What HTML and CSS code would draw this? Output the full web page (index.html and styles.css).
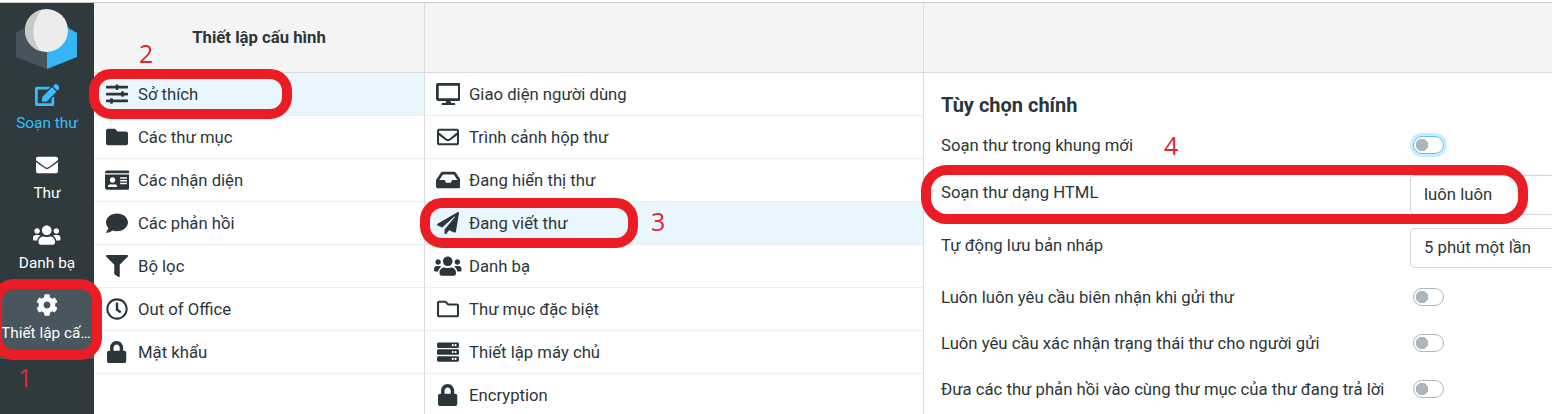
FILE: index.html
```html
<!DOCTYPE html>
<html lang="vi">
<head>
    <meta charset="UTF-8">
    <title>Thiết lập cấu hình</title>
    <link rel="stylesheet" href="styles.css">
</head>
<body>

<svg class="sprite" xmlns="http://www.w3.org/2000/svg">
    <defs>
        <path id="i-edit" d="M402.6 83.2l90.2 90.2c3.8 3.8 3.8 10 0 13.8L274.4 405.6l-92.8 10.3c-12.4 1.4-22.9-9.1-21.5-21.5l10.3-92.8L388.8 83.2c3.8-3.8 10-3.8 13.8 0zm162-22.9l-48.8-48.8c-15.2-15.2-39.9-15.2-55.2 0l-35.4 35.4c-3.8 3.8-3.8 10 0 13.8l90.2 90.2c3.8 3.8 10 3.8 13.8 0l35.4-35.4c15.2-15.3 15.2-40 0-55.2zM384 346.2V448H64V128h229.8c3.2 0 6.2-1.3 8.5-3.5l40-40c7.6-7.6 2.2-20.5-8.5-20.5H48C21.5 64 0 85.5 0 112v352c0 26.5 21.5 48 48 48h352c26.5 0 48-21.5 48-48V306.2c0-10.7-12.9-16-20.5-8.5l-40 40c-2.2 2.3-3.5 5.3-3.5 8.5z"/>
        <path id="i-envelope" d="M502.3 190.8c3.9-3.1 9.7-.2 9.7 4.7V400c0 26.5-21.5 48-48 48H48c-26.5 0-48-21.5-48-48V195.6c0-5 5.7-7.8 9.7-4.7 22.4 17.4 52.1 39.5 154.1 113.6 21.1 15.4 56.7 47.8 92.2 47.6 35.7.3 72-32.8 92.3-47.6 102-74.1 131.6-96.3 154-113.7zM256 320c23.2.4 56.6-29.2 73.4-41.4 132.7-96.3 142.8-104.7 173.4-128.7 5.8-4.5 9.2-11.5 9.2-18.9v-19c0-26.5-21.5-48-48-48H48C21.5 64 0 85.5 0 112v19c0 7.4 3.4 14.3 9.2 18.9 30.6 23.9 40.7 32.4 173.4 128.7 16.8 12.2 50.2 41.8 73.4 41.4z"/>
        <path id="i-envelope-o" d="M464 64H48C21.49 64 0 85.49 0 112v288c0 26.51 21.49 48 48 48h416c26.51 0 48-21.49 48-48V112c0-26.51-21.49-48-48-48zm0 48v40.805c-22.422 18.259-58.168 46.651-134.587 106.49-16.841 13.247-50.201 45.072-73.413 44.701-23.208.375-56.579-31.459-73.413-44.701C106.18 199.465 70.425 171.067 48 152.805V112h416zM48 400V214.398c22.914 18.251 55.409 43.862 104.938 82.646 21.857 17.205 60.134 55.186 103.062 54.955 42.717.231 80.509-37.199 103.053-54.947 49.528-38.783 82.032-64.401 104.947-82.653V400H48z"/>
        <path id="i-users" d="M96 224c35.3 0 64-28.7 64-64s-28.7-64-64-64-64 28.7-64 64 28.7 64 64 64zm448 0c35.3 0 64-28.7 64-64s-28.7-64-64-64-64 28.7-64 64 28.7 64 64 64zm32 32h-64c-17.6 0-33.5 7.1-45.1 18.6 40.3 22.1 68.9 62 75.1 109.4h66c17.7 0 32-14.3 32-32v-32c0-35.3-28.7-64-64-64zm-256 0c61.9 0 112-50.1 112-112S381.9 32 320 32 208 82.1 208 144s50.1 112 112 112zm76.8 32h-8.3c-20.8 10-43.9 16-68.5 16s-47.6-6-68.5-16h-8.3C179.6 288 128 339.6 128 403.2V432c0 26.5 21.5 48 48 48h288c26.5 0 48-21.5 48-48v-28.8c0-63.6-51.6-115.2-115.2-115.2zm-223.7-13.4C161.5 263.1 145.6 256 128 256H64c-35.3 0-64 28.7-64 64v32c0 17.7 14.3 32 32 32h65.9c6.3-47.4 34.9-87.3 75.2-109.4z"/>
        <path id="i-cog" d="M487.4 315.7l-42.6-24.6c4.3-23.2 4.3-47 0-70.2l42.6-24.6c4.9-2.8 7.1-8.6 5.5-14-11.1-35.6-30-67.8-54.7-94.6-3.8-4.1-10-5.1-14.8-2.3L380.8 110c-17.9-15.4-38.5-27.3-60.8-35.1V25.8c0-5.6-3.9-10.5-9.4-11.7-36.7-8.2-74.3-7.8-109.2 0-5.5 1.2-9.4 6.1-9.4 11.7V75c-22.2 7.9-42.8 19.8-60.8 35.1L88.7 85.5c-4.9-2.8-11-1.9-14.8 2.3-24.7 26.7-43.6 58.9-54.7 94.6-1.7 5.4.6 11.2 5.5 14L67.3 221c-4.3 23.2-4.3 47 0 70.2l-42.6 24.6c-4.9 2.8-7.1 8.6-5.5 14 11.1 35.6 30 67.8 54.7 94.6 3.8 4.1 10 5.1 14.8 2.3l42.6-24.6c17.9 15.4 38.5 27.3 60.8 35.1v49.2c0 5.6 3.9 10.5 9.4 11.7 36.7 8.2 74.3 7.8 109.2 0 5.5-1.2 9.4-6.1 9.4-11.7v-49.2c22.2-7.9 42.8-19.8 60.8-35.1l42.6 24.6c4.9 2.8 11 1.9 14.8-2.3 24.7-26.7 43.6-58.9 54.7-94.6 1.5-5.5-.7-11.3-5.6-14.1zM256 336c-44.1 0-80-35.9-80-80s35.9-80 80-80 80 35.9 80 80-35.9 80-80 80z"/>
        <path id="i-sliders" d="M496 384H160v-16c0-8.8-7.2-16-16-16h-32c-8.8 0-16 7.2-16 16v16H16c-8.8 0-16 7.2-16 16v32c0 8.8 7.2 16 16 16h80v16c0 8.8 7.2 16 16 16h32c8.8 0 16-7.2 16-16v-16h336c8.8 0 16-7.2 16-16v-32c0-8.8-7.2-16-16-16zm0-160h-80v-16c0-8.8-7.2-16-16-16h-32c-8.8 0-16 7.2-16 16v16H16c-8.8 0-16 7.2-16 16v32c0 8.8 7.2 16 16 16h336v16c0 8.8 7.2 16 16 16h32c8.8 0 16-7.2 16-16v-16h80c8.8 0 16-7.2 16-16v-32c0-8.8-7.2-16-16-16zm0-160H288V48c0-8.8-7.2-16-16-16h-32c-8.8 0-16 7.2-16 16v16H16C7.2 64 0 71.2 0 80v32c0 8.8 7.2 16 16 16h208v16c0 8.8 7.2 16 16 16h32c8.8 0 16-7.2 16-16v-16h208c8.8 0 16-7.2 16-16V80c0-8.8-7.2-16-16-16z"/>
        <path id="i-folder" d="M464 128H272l-64-64H48C21.49 64 0 85.49 0 112v288c0 26.51 21.49 48 48 48h416c26.51 0 48-21.49 48-48V176c0-26.51-21.49-48-48-48z"/>
        <path id="i-folder-o" d="M464 128H272l-54.63-54.63c-6-6-14.14-9.37-22.63-9.37H48C21.49 64 0 85.49 0 112v288c0 26.51 21.49 48 48 48h416c26.51 0 48-21.49 48-48V176c0-26.51-21.49-48-48-48zm0 272H48V112h140.12l54.63 54.63c6 6 14.14 9.37 22.63 9.37H464v224z"/>
        <path id="i-idcard" d="M528 32H48C21.5 32 0 53.5 0 80v16h576V80c0-26.5-21.5-48-48-48zM0 432c0 26.5 21.5 48 48 48h480c26.5 0 48-21.5 48-48V128H0v304zm352-232c0-4.4 3.6-8 8-8h144c4.4 0 8 3.6 8 8v16c0 4.4-3.6 8-8 8H360c-4.4 0-8-3.6-8-8v-16zm0 64c0-4.4 3.6-8 8-8h144c4.4 0 8 3.6 8 8v16c0 4.4-3.6 8-8 8H360c-4.4 0-8-3.6-8-8v-16zm0 64c0-4.4 3.6-8 8-8h144c4.4 0 8 3.6 8 8v16c0 4.4-3.6 8-8 8H360c-4.4 0-8-3.6-8-8v-16zM176 192c35.3 0 64 28.7 64 64s-28.7 64-64 64-64-28.7-64-64 28.7-64 64-64zM67.1 396.2C75.5 370.5 99.6 352 128 352h8.2c12.3 5.1 25.7 8 39.8 8s27.6-2.9 39.8-8h8.2c28.4 0 52.5 18.5 60.9 44.2 3.2 9.9-5.2 19.8-15.6 19.8H82.7c-10.4 0-18.8-10-15.6-19.8z"/>
        <path id="i-comment" d="M256 32C114.6 32 0 125.1 0 240c0 49.6 21.4 95 57 130.7C44.5 421.1 2.7 466 2.2 466.5c-2.2 2.3-2.8 5.7-1.5 8.7S4.8 480 8 480c66.3 0 116-31.8 140.6-51.4 32.7 12.3 69 19.4 107.4 19.4 141.4 0 256-93.1 256-208S397.4 32 256 32z"/>
        <path id="i-filter" d="M487.976 0H24.028C2.71 0-8.047 25.866 7.058 40.971L192 225.941V432c0 7.831 3.821 15.17 10.237 19.662l80 55.98C298.02 518.69 320 507.493 320 487.98V225.941l184.947-184.97C520.021 25.896 509.338 0 487.976 0z"/>
        <path id="i-clock" d="M256 8C119 8 8 119 8 256s111 248 248 248 248-111 248-248S393 8 256 8zm0 448c-110.5 0-200-89.5-200-200S145.5 56 256 56s200 89.5 200 200-89.5 200-200 200zm61.8-104.4l-84.9-61.7c-3.1-2.3-4.9-5.9-4.9-9.7V116c0-6.6 5.4-12 12-12h32c6.6 0 12 5.4 12 12v141.7l66.8 48.6c5.4 3.9 6.5 11.4 2.6 16.8L334.6 349c-3.9 5.3-11.4 6.5-16.8 2.6z"/>
        <path id="i-lock" d="M400 224h-24v-72C376 68.2 307.8 0 224 0S72 68.2 72 152v72H48c-26.5 0-48 21.5-48 48v192c0 26.5 21.5 48 48 48h352c26.5 0 48-21.5 48-48V272c0-26.5-21.5-48-48-48zm-104 0H152v-72c0-39.7 32.3-72 72-72s72 32.3 72 72v72z"/>
        <path id="i-desktop" d="M528 0H48C21.5 0 0 21.5 0 48v320c0 26.5 21.5 48 48 48h192l-16 48h-72c-13.3 0-24 10.7-24 24s10.7 24 24 24h272c13.3 0 24-10.7 24-24s-10.7-24-24-24h-72l-16-48h192c26.5 0 48-21.5 48-48V48c0-26.5-21.5-48-48-48zm-16 352H64V64h448v288z"/>
        <path id="i-inbox" d="M567.938 243.908L462.25 85.374A48.003 48.003 0 0 0 422.311 64H153.689a48 48 0 0 0-39.938 21.374L8.062 243.908A47.994 47.994 0 0 0 0 270.533V400c0 26.51 21.49 48 48 48h480c26.51 0 48-21.49 48-48V270.533a47.994 47.994 0 0 0-8.062-26.625zM162.252 128h251.497l85.333 128H376l-32 64H232l-32-64H76.918l85.334-128z"/>
        <path id="i-plane" d="M476 3.2L12.5 270.6c-18.1 10.4-15.8 35.6 2.2 43.2L121 358.4l287.3-253.2c5.5-4.9 13.3 2.6 8.6 8.3L176 407v80.5c0 23.6 28.5 32.9 42.5 15.8L282 426l124.6 52.2c14.2 6 30.4-2.9 33-18.2l72-432C515 7.8 493.3-6.8 476 3.2z"/>
        <path id="i-server" d="M480 160H32c-17.673 0-32-14.327-32-32V64c0-17.673 14.327-32 32-32h448c17.673 0 32 14.327 32 32v64c0 17.673-14.327 32-32 32zm-48-88c-13.255 0-24 10.745-24 24s10.745 24 24 24 24-10.745 24-24-10.745-24-24-24zm-64 0c-13.255 0-24 10.745-24 24s10.745 24 24 24 24-10.745 24-24-10.745-24-24-24zm112 248H32c-17.673 0-32-14.327-32-32v-64c0-17.673 14.327-32 32-32h448c17.673 0 32 14.327 32 32v64c0 17.673-14.327 32-32 32zm-48-88c-13.255 0-24 10.745-24 24s10.745 24 24 24 24-10.745 24-24-10.745-24-24-24zm-64 0c-13.255 0-24 10.745-24 24s10.745 24 24 24 24-10.745 24-24-10.745-24-24-24zm112 248H32c-17.673 0-32-14.327-32-32v-64c0-17.673 14.327-32 32-32h448c17.673 0 32 14.327 32 32v64c0 17.673-14.327 32-32 32zm-48-88c-13.255 0-24 10.745-24 24s10.745 24 24 24 24-10.745 24-24-10.745-24-24-24zm-64 0c-13.255 0-24 10.745-24 24s10.745 24 24 24 24-10.745 24-24-10.745-24-24-24z"/>
    </defs>
</svg>

<div class="app">
    <!-- Menu chính -->
    <nav class="sidebar">
        <svg class="logo" viewBox="0 0 62 62">
            <path d="M0 24L12 17L31 30V60L0 48z" fill="#48545b"/>
            <path d="M61 24L49 17L31 30V60L61 48z" fill="#37b4f5"/>
            <circle cx="30.5" cy="21.5" r="21.5" fill="#ececec"/>
            <path d="M26 .5A21.5 21.5 0 0 0 24 42 32 32 0 0 1 26 .5z" fill="#c9c9c9"/>
        </svg>
        <a class="nav-item active-blue">
            <svg class="icon" viewBox="0 0 576 512"><use href="#i-edit"/></svg>
            <span class="nav-label">Soạn thư</span>
        </a>
        <a class="nav-item">
            <svg class="icon" viewBox="0 0 512 512"><use href="#i-envelope"/></svg>
            <span class="nav-label">Thư</span>
        </a>
        <a class="nav-item">
            <svg class="icon" viewBox="0 0 640 512"><use href="#i-users"/></svg>
            <span class="nav-label">Danh bạ</span>
        </a>
        <a class="nav-item selected">
            <svg class="icon" viewBox="0 0 512 512"><use href="#i-cog"/></svg>
            <span class="nav-label">Thiết lập cấu hình</span>
        </a>
    </nav>

    <!-- Thiết lập cấu hình -->
    <section class="col col-sections">
        <header class="col-header">Thiết lập cấu hình</header>
        <ul class="list">
            <li class="list-item current"><span class="icon-box"><svg class="icon" viewBox="0 0 512 512"><use href="#i-sliders"/></svg></span>Sở thích</li>
            <li class="list-item"><span class="icon-box"><svg class="icon" viewBox="0 0 512 512"><use href="#i-folder"/></svg></span>Các thư mục</li>
            <li class="list-item"><span class="icon-box"><svg class="icon" viewBox="0 0 576 512"><use href="#i-idcard"/></svg></span>Các nhận diện</li>
            <li class="list-item"><span class="icon-box"><svg class="icon" viewBox="0 0 512 512"><use href="#i-comment"/></svg></span>Các phản hồi</li>
            <li class="list-item"><span class="icon-box"><svg class="icon" viewBox="0 0 512 512"><use href="#i-filter"/></svg></span>Bộ lọc</li>
            <li class="list-item"><span class="icon-box"><svg class="icon" viewBox="0 0 512 512"><use href="#i-clock"/></svg></span>Out of Office</li>
            <li class="list-item"><span class="icon-box"><svg class="icon" viewBox="0 0 448 512"><use href="#i-lock"/></svg></span>Mật khẩu</li>
        </ul>
    </section>

    <!-- Sở thích -->
    <section class="col col-prefs">
        <header class="col-header"></header>
        <ul class="list">
            <li class="list-item"><span class="icon-box"><svg class="icon" viewBox="0 0 576 512"><use href="#i-desktop"/></svg></span>Giao diện người dùng</li>
            <li class="list-item"><span class="icon-box"><svg class="icon" viewBox="0 0 512 512"><use href="#i-envelope-o"/></svg></span>Trình cảnh hộp thư</li>
            <li class="list-item"><span class="icon-box"><svg class="icon" viewBox="0 0 576 512"><use href="#i-inbox"/></svg></span>Đang hiển thị thư</li>
            <li class="list-item current"><span class="icon-box"><svg class="icon" viewBox="0 0 512 512"><use href="#i-plane"/></svg></span>Đang viết thư</li>
            <li class="list-item"><span class="icon-box"><svg class="icon" viewBox="0 0 640 512"><use href="#i-users"/></svg></span>Danh bạ</li>
            <li class="list-item"><span class="icon-box"><svg class="icon" viewBox="0 0 512 512"><use href="#i-folder-o"/></svg></span>Thư mục đặc biệt</li>
            <li class="list-item"><span class="icon-box"><svg class="icon" viewBox="0 0 512 512"><use href="#i-server"/></svg></span>Thiết lập máy chủ</li>
            <li class="list-item"><span class="icon-box"><svg class="icon" viewBox="0 0 448 512"><use href="#i-lock"/></svg></span>Encryption</li>
        </ul>
    </section>

    <!-- Tùy chọn -->
    <section class="col col-form">
        <header class="col-header"></header>
        <div class="form-body">
            <h2 class="form-title">Tùy chọn chính</h2>
            <div class="form-row"><label class="form-label">Soạn thư trong khung mới</label><input type="checkbox" class="toggle focused"></div>
            <div class="form-row tall"><label class="form-label">Soạn thư dạng HTML</label><div class="select">luôn luôn</div></div>
            <div class="form-row tall"><label class="form-label">Tự động lưu bản nháp</label><div class="select">5 phút một lần</div></div>
            <div class="form-row"><label class="form-label">Luôn luôn yêu cầu biên nhận khi gửi thư</label><input type="checkbox" class="toggle"></div>
            <div class="form-row"><label class="form-label">Luôn yêu cầu xác nhận trạng thái thư cho người gửi</label><input type="checkbox" class="toggle"></div>
            <div class="form-row"><label class="form-label">Đưa các thư phản hồi vào cùng thư mục của thư đang trả lời</label><input type="checkbox" class="toggle"></div>
        </div>
    </section>
</div>

<!-- Khung đỏ và số chú thích -->
<div class="mark mark-1"></div>
<div class="mark mark-2"></div>
<div class="mark mark-3"></div>
<div class="mark mark-4"></div>
<span class="num num-1">1</span>
<span class="num num-2">2</span>
<span class="num num-3">3</span>
<span class="num num-4">4</span>

</body>
</html>
```

FILE: styles.css
```css
/* Estilos Gerais */
html, body {
    height: 100%;
}

body {
    margin: 0;
    padding-top: 2px;
    box-sizing: border-box;
    overflow: hidden;
    position: relative;
    background: white;
    font-family: Roboto, "Liberation Sans", sans-serif;
    font-size: 16.7px;
    color: #2c363a;
}

.sprite {
    display: none;
}

.icon {
    height: 22px;
    fill: currentColor;
    display: block;
}

.app {
    display: flex;
    height: 100%;
    border-top: 1px solid #c9c9c9;
}

/* Menu chính */
.sidebar {
    width: 94px;
    flex: none;
    background-color: #2f3a3f;
    color: white;
}

.logo {
    display: block;
    width: 62px;
    height: 62px;
    margin: 6px 0 8px 16px;
}

.nav-item {
    display: flex;
    flex-direction: column;
    align-items: center;
    height: 70px;
    padding: 5px 1px 0;
    box-sizing: border-box;
}

.nav-label {
    width: 100%;
    margin-top: 7px;
    font-size: 15.4px;
    line-height: 20px;
    text-align: center;
    white-space: nowrap;
    overflow: hidden;
    text-overflow: ellipsis;
}

.active-blue {
    color: #37beff;
}

.selected {
    background-color: #49565d;
}

/* Colunas */
.col {
    flex: none;
    box-sizing: border-box;
    border-right: 1px solid #dcdcdc;
}

.col-sections {
    width: 331px;
}

.col-prefs {
    width: 499px;
}

.col-form {
    flex: 1;
    min-width: 0;
    border-right: none;
    overflow: hidden;
}

.col-header {
    height: 70px;
    box-sizing: border-box;
    border-bottom: 1px solid #dcdcdc;
    background-color: #f4f4f4;
    padding-top: 24px;
    line-height: 22px;
    font-weight: 700;
    text-align: center;
}

.list {
    list-style: none;
    margin: 0;
    padding: 0;
}

.list-item {
    display: flex;
    align-items: center;
    gap: 6px;
    height: 43px;
    padding-left: 8px;
    box-sizing: border-box;
    border-bottom: 1px solid #eeeeee;
}

.list-item.current {
    background-color: #e9f6fd;
}

.icon-box {
    width: 30px;
    display: flex;
    justify-content: center;
}

/* Formulário */
.form-body {
    padding: 19px 0 0 17px;
}

.form-title {
    margin: 0 0 4px;
    height: 26px;
    font-size: 20px;
    line-height: 26px;
    font-weight: 700;
}

.form-row {
    display: flex;
    align-items: center;
    height: 46px;
}

.form-row.tall {
    height: 53px;
}

.form-label {
    width: 469px;
    flex: none;
    margin-top: 1px;
    white-space: nowrap;
}

.form-row.tall .form-label {
    margin-top: -4px;
}

.select {
    flex: none;
    width: 240px;
    height: 40px;
    padding-left: 13px;
    box-sizing: border-box;
    border: 1px solid #ced4da;
    border-radius: 5px;
    line-height: 38px;
}

.toggle {
    appearance: none;
    width: 31px;
    height: 18px;
    margin: 0 0 0 3px;
    box-sizing: border-box;
    border: 1px solid #adb5bd;
    border-radius: 9px;
    background: radial-gradient(circle at 8px 50%, #adb5bd 6px, transparent 6.5px);
}

.toggle.focused {
    border-color: #5fbfe8;
    box-shadow: 0 0 0 3px rgba(55, 190, 255, 0.28);
}

/* Khung đỏ */
.mark {
    position: absolute;
    box-sizing: border-box;
    border: 10px solid #ec1c24;
    border-radius: 22px;
}

.mark-1 {
    left: -8px;
    top: 279px;
    width: 110px;
    height: 81px;
}

.mark-2 {
    left: 89px;
    top: 69px;
    width: 203px;
    height: 50px;
}

.mark-3 {
    left: 420px;
    top: 198px;
    width: 218px;
    height: 50px;
}

.mark-4 {
    left: 921px;
    top: 165px;
    width: 607px;
    height: 59px;
    border-radius: 26px;
}

.num {
    position: absolute;
    font-family: "Open Sans", sans-serif;
    font-size: 25px;
    line-height: 30px;
    color: #e2272e;
}

.num-1 { left: 18px; top: 362px; }
.num-2 { left: 139px; top: 38px; }
.num-3 { left: 651px; top: 206px; }
.num-4 { left: 1164px; top: 130px; }
```
